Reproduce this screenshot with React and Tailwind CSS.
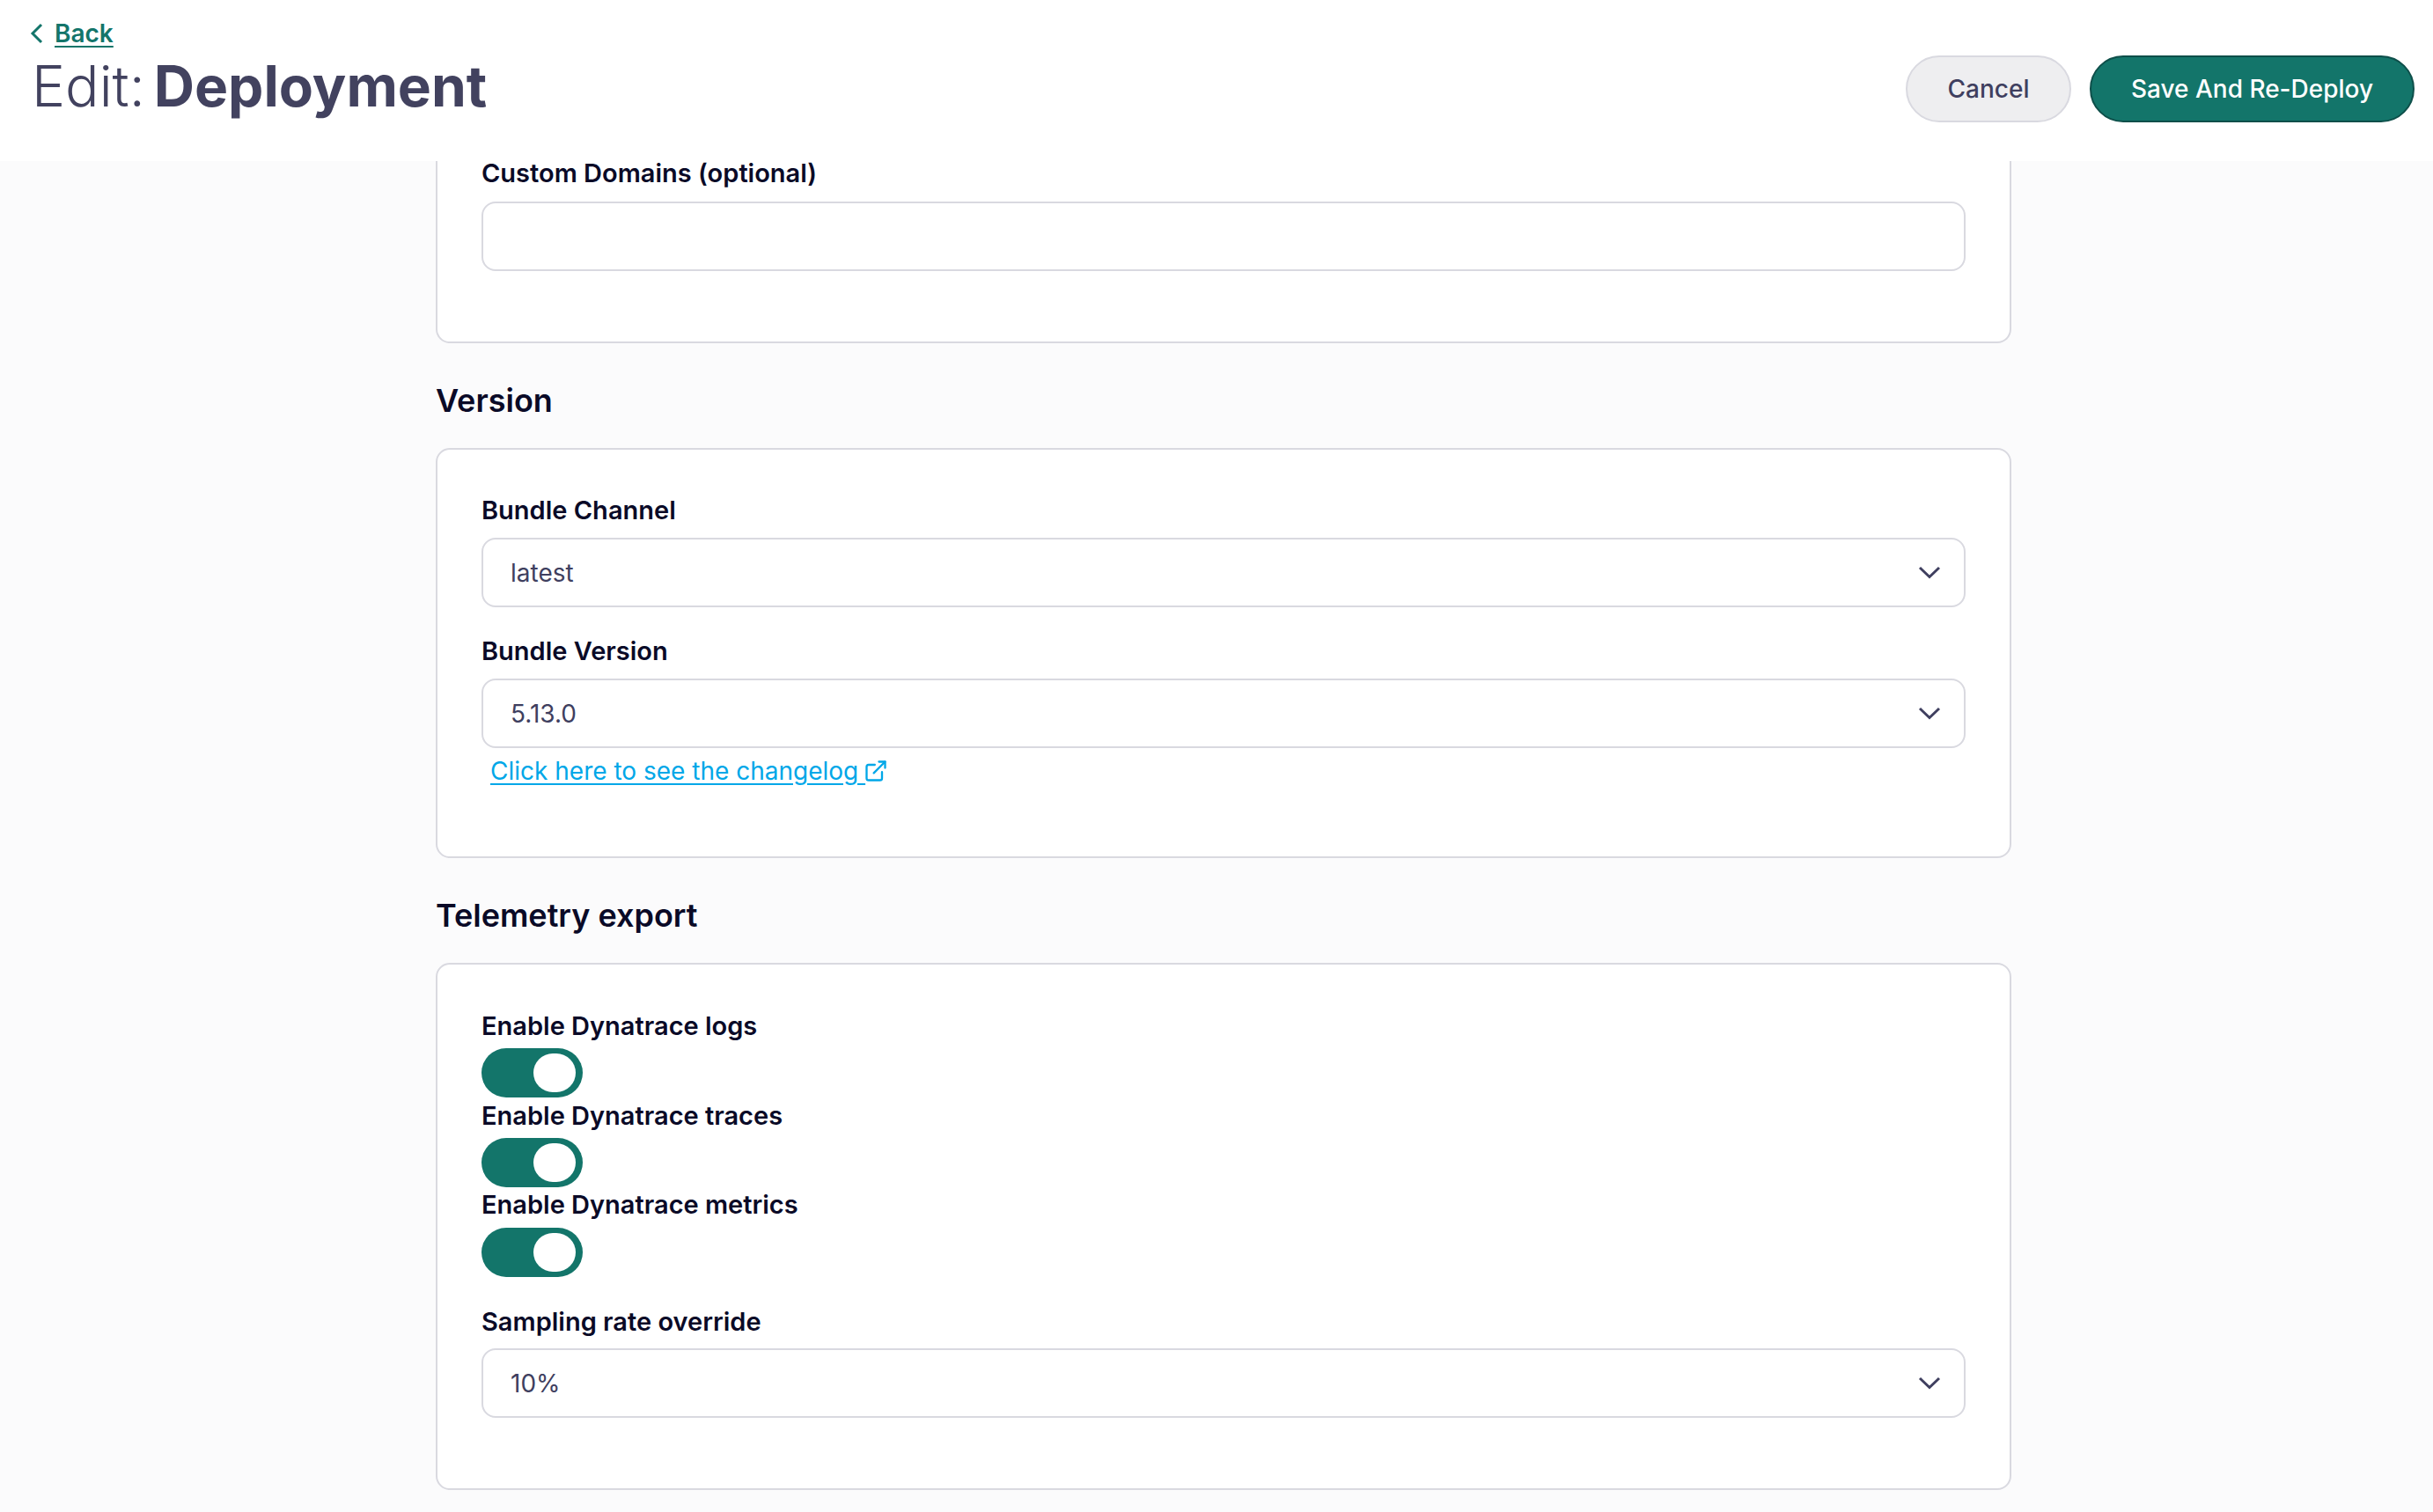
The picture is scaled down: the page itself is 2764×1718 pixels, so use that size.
import React from 'react';
import { ExternalLink } from 'lucide-react';

const Chevron = () => (
  <svg width="26" height="15" viewBox="0 0 26 15" fill="none" className="text-[#3f3f5f]">
    <path d="M2 2l11 10.5L24 2" stroke="currentColor" strokeWidth="3" />
  </svg>
);

const Label = ({ children, className = '' }) => (
  <label className={`block h-[28px] text-[29px] leading-[28px] font-semibold text-[#0a0a27] ${className}`}>{children}</label>
);

const Select = ({ value }) => (
  <div className="flex h-[79px] items-center justify-between rounded-[16px] border-2 border-[#d9d9e0] bg-white pl-[31px] pr-[26px]">
    <span className="text-[28px] text-[#3f3f5f]">{value}</span>
    <Chevron />
  </div>
);

const Toggle = () => (
  <div className="flex h-[56px] w-[115px] items-center justify-end rounded-full bg-[#13756a] pr-[8px]">
    <div className="h-[44px] w-[48px] rounded-full bg-white"></div>
  </div>
);

const Heading = ({ children }) => (
  <h2 className="mt-[45px] mb-[34px] h-[40px] text-[36px] leading-[40px] font-semibold text-[#0a0a27]">{children}</h2>
);

const Card = ({ className = '', children }) => (
  <div className={`rounded-[16px] border-2 border-[#d9d9e0] bg-white px-[50px] ${className}`}>{children}</div>
);

export default function App() {
  return (
    <div className="h-[1718px] overflow-hidden bg-[#fbfbfc] font-['Inter',sans-serif]">
      <header className="flex h-[183px] items-start justify-between bg-white pl-[34px] pr-[21px]">
        <div>
          <a className="mt-[21px] flex h-[34px] items-center gap-[12px] text-[28px] font-semibold text-[#13756a]">
            <svg width="16" height="24" viewBox="0 0 16 24" fill="none">
              <path d="M13 2L3 12l10 10" stroke="currentColor" strokeWidth="3" />
            </svg>
            <span className="underline underline-offset-4">Back</span>
          </a>
          <h1 className="mt-[4px] ml-[2px] flex gap-[10px] text-[64px] leading-[78px] text-[#42425f]">
            <span className="font-light">Edit:</span>
            <span className="font-bold">Deployment</span>
          </h1>
        </div>
        <div className="mt-[63px] flex gap-[21px]">
          <button className="h-[76px] w-[188px] rounded-full border-2 border-[#d9d9e0] bg-[#eeeef0] text-[28px] font-medium text-[#3f3f5f]">
            Cancel
          </button>
          <button className="h-[76px] w-[369px] rounded-full border-2 border-[#0e4f4a] bg-[#13756a] text-[28px] font-medium text-white">
            Save And Re-Deploy
          </button>
        </div>
      </header>

      <main className="ml-[495px] w-[1790px]">
        <Card className="rounded-t-none border-t-0 pb-[80px]">
          <Label className="mb-[18px]">Custom Domains (optional)</Label>
          <div className="h-[79px] rounded-[16px] border-2 border-[#d9d9e0] bg-white"></div>
        </Card>

        <Heading>Version</Heading>
        <Card className="pt-[55px] pb-[82px]">
          <Label className="mb-[17px]">Bundle Channel</Label>
          <Select value="latest" />
          <Label className="mt-[36px] mb-[17px]">Bundle Version</Label>
          <Select value="5.13.0" />
          <a className="mt-[11px] ml-[10px] flex h-[30px] items-center text-[28px] text-[#00a7e8] underline underline-offset-4">
            Click here to see the changelog&nbsp;
            <ExternalLink size={28} strokeWidth={2} className="-ml-[2px]" />
          </a>
        </Card>

        <Heading>Telemetry export</Heading>
        <Card className="pt-[56px] pb-[80px]">
          <Label className="mb-[11px]">Enable Dynatrace logs</Label>
          <Toggle />
          <Label className="mt-[7px] mb-[11px]">Enable Dynatrace traces</Label>
          <Toggle />
          <Label className="mt-[6px] mb-[12px]">Enable Dynatrace metrics</Label>
          <Toggle />
          <Label className="mt-[37px] mb-[16px]">Sampling rate override</Label>
          <Select value="10%" />
        </Card>
      </main>
    </div>
  );
}
